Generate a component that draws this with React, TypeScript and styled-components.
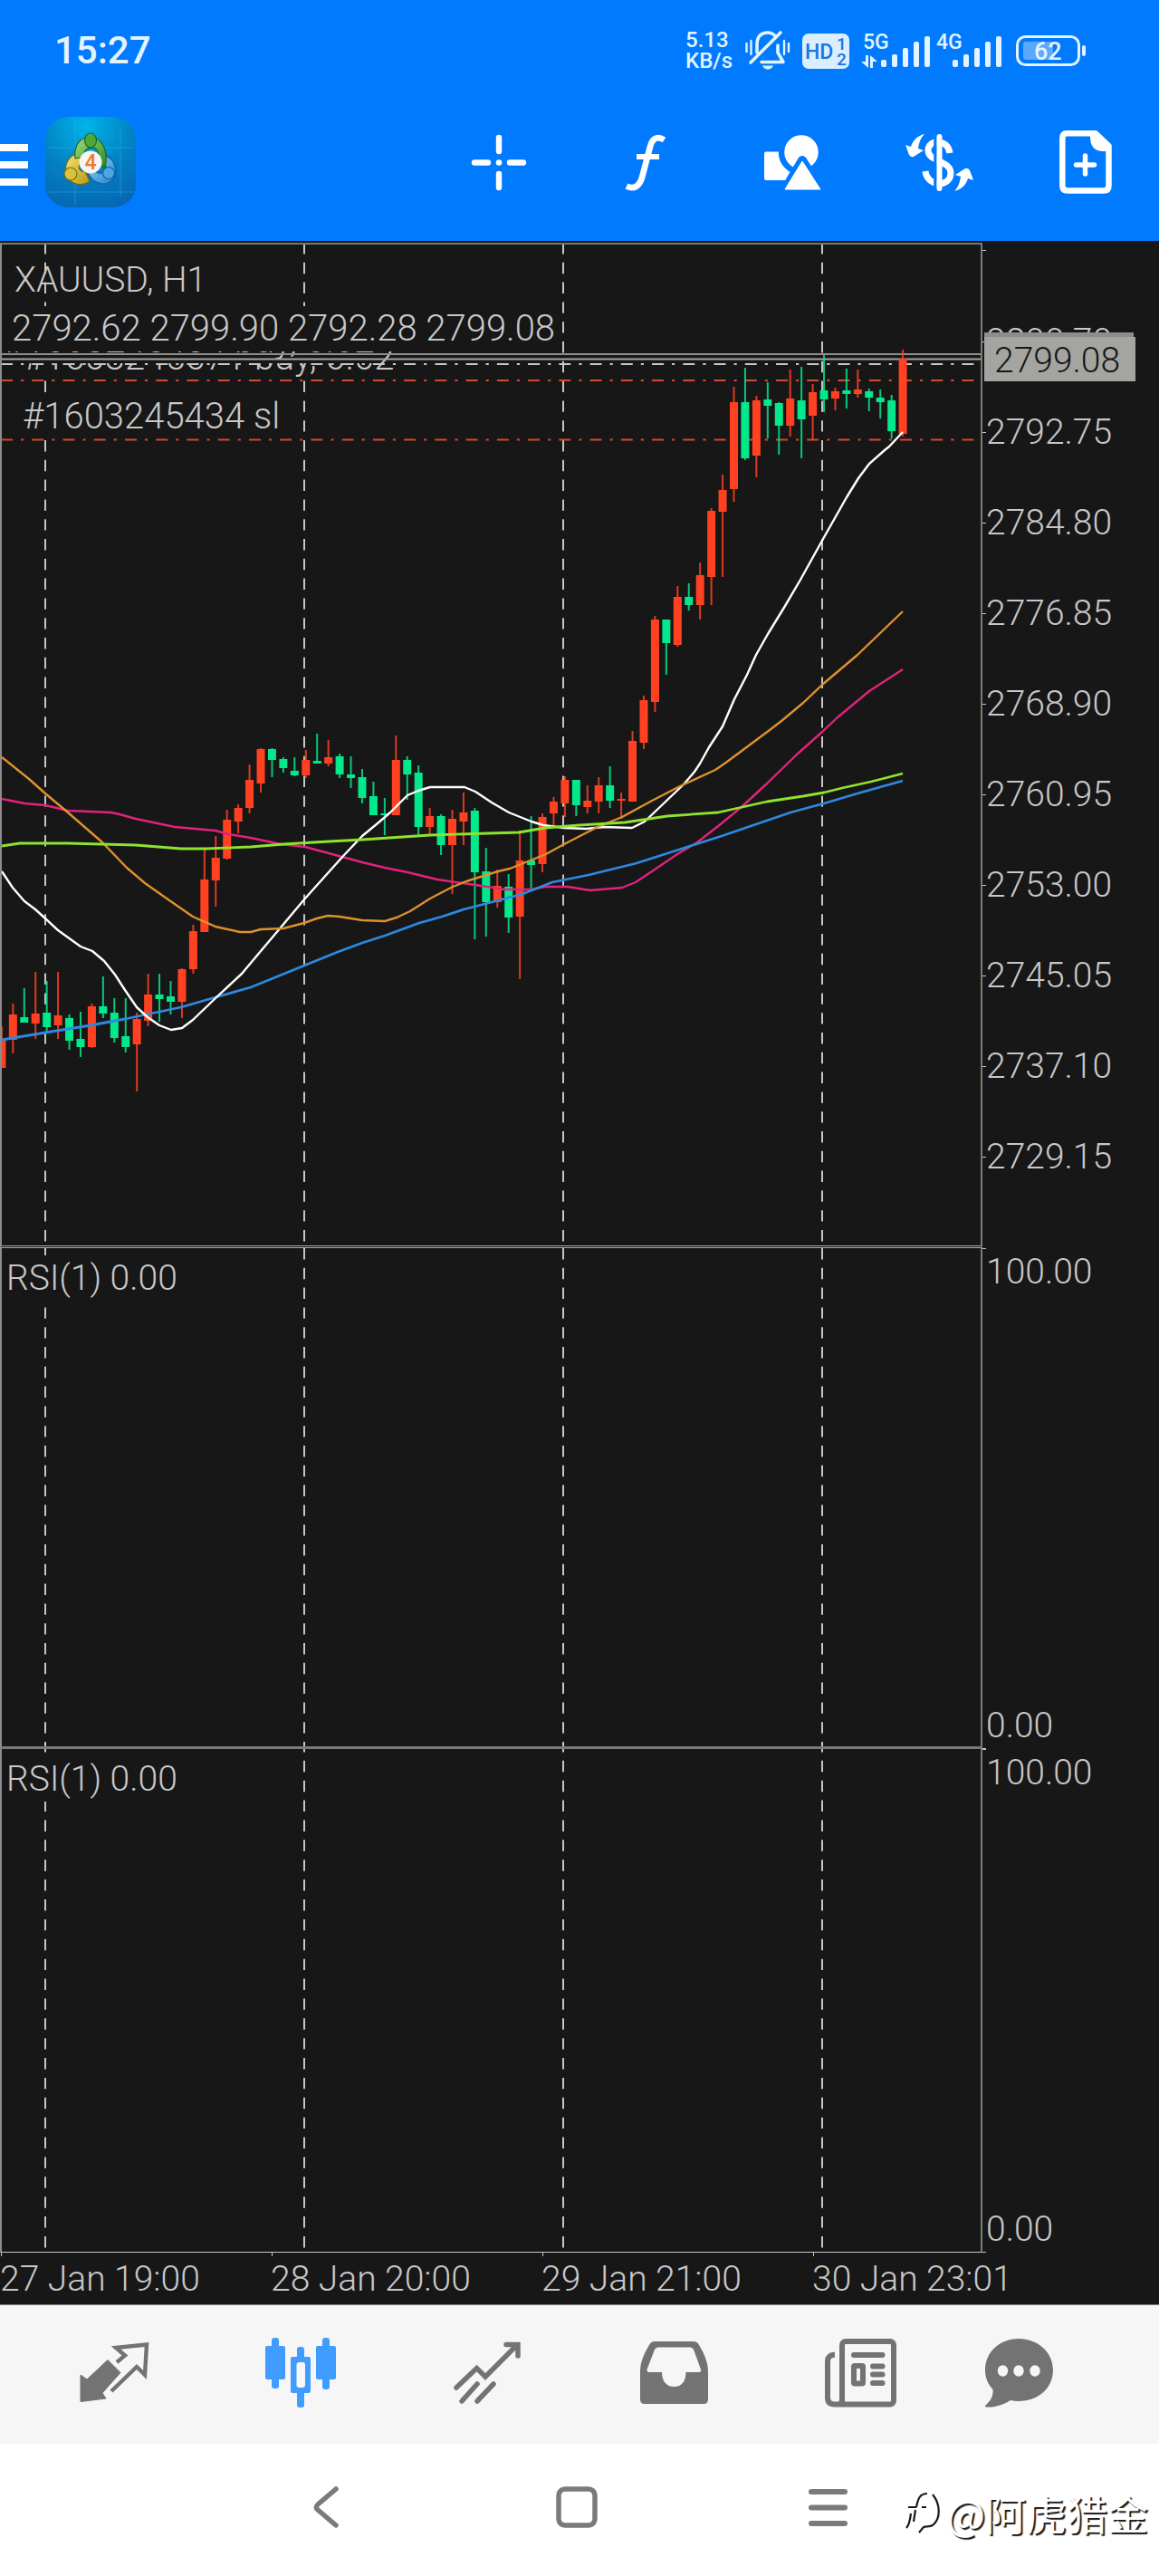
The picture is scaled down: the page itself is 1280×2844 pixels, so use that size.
import React from "react";
import styled, { createGlobalStyle } from "styled-components";

const GlobalStyle = createGlobalStyle`
  *, *::before, *::after { box-sizing: border-box; }
  body { margin: 0; background: #171717; }
  svg { display: block; overflow: visible; }
`;

const sans = `Roboto, "Liberation Sans", "Noto Sans CJK SC", sans-serif`;

/* ---------- Page ---------- */

const Page = styled.div`
  display: flex;
  flex-direction: column;
  background: #171717;
  font-family: ${sans};
  overflow: hidden;
`;

/* ---------- Header ---------- */

const Header = styled.header`
  background: #007aff;
  padding-bottom: 20px;
`;

const StatusBar = styled.div`
  display: flex;
  align-items: center;
  justify-content: space-between;
  height: 112px;
  padding: 0 80px 0 60px;
  color: #e3f3ff;
  font-weight: 500;
`;

const Clock = styled.time`
  font-size: 42px;
  line-height: 50px;
`;

const StatusIcons = styled.div`
  display: flex;
  align-items: center;
  gap: 13px;
`;

const Speed = styled.div`
  width: 53px;
  font-size: 24px;
  line-height: 23px;
`;

const Signals = styled.div`
  display: flex;
  gap: 7px;
`;

const StatusText = styled.text`
  font-family: ${sans};
  font-weight: 500;
  font-size: ${(p: { $size: number }) => p.$size}px;
`;

const Toolbar = styled.nav`
  display: flex;
  align-items: center;
  height: 134px;
`;

const IconButton = styled.button<{ $width?: string }>`
  display: flex;
  align-items: center;
  justify-content: center;
  width: ${(p) => p.$width ?? "auto"};
  height: 100%;
  padding: 0;
  border: 0;
  background: none;
  color: inherit;
  cursor: pointer;
`;

const Logo = styled.div`
  margin-left: 19px;
`;

const Tools = styled.div`
  display: flex;
  height: 100%;
  margin-left: auto;
  color: #ffffff;
`;

/* ---------- Chart ---------- */

const Chart = styled.main`
  padding-top: 2px;
  border-bottom: 1px solid #7a7a7a;
  color: #c8c8c8;
  font-size: 39px;
  font-weight: 300;
  line-height: 50px;
  white-space: nowrap;
`;

const Panel = styled.section<{ $height: number }>`
  display: grid;
  grid-template-columns: 1fr 195px;
  height: ${(p) => p.$height}px;
`;

const Plot = styled.div<{ $top?: boolean; $divider: string }>`
  position: relative;
  overflow: hidden;
  border-left: 2px solid #8c8c8c;
  border-right: 2px solid #7a7a7a;
  border-top: ${(p) => (p.$top ? "2px solid #7d7672" : "0")};
  border-bottom: ${(p) => p.$divider};
`;

const Layer = styled.svg`
  position: absolute;
  inset: 0;
  width: 100%;
  height: 100%;
`;

const OrderLabel = styled.div<{ $x: number; $y: number }>`
  position: absolute;
  left: ${(p) => p.$x}px;
  top: ${(p) => p.$y}px;
  background: #171717;
  font-size: 40px;
`;

const Caption = styled.div`
  position: relative;
  padding-top: 14px;
`;

const SymbolName = styled.h1`
  margin: 0 0 4px;
  padding-left: 14px;
  font: inherit;
`;

const Ohlc = styled.p`
  width: max-content;
  margin: 0;
  padding-left: 11px;
  background: #171717;
  font-size: 40px;
`;

const IndicatorName = styled.h2`
  position: relative;
  width: max-content;
  margin: 8px 0 0 5px;
  font: inherit;
  background: #171717;
`;

const PriceScale = styled.div`
  position: relative;
`;

const TopTick = styled.div`
  height: 59px;
  padding-top: 8px;
  &::before {
    content: "";
    display: block;
    width: 4px;
    height: 1px;
    background: #c8c8c8;
  }
`;

const PriceLabel = styled.div`
  display: flex;
  align-items: center;
  height: 100px;
  &::before {
    content: "";
    width: 4px;
    height: 1px;
    background: #c8c8c8;
  }
`;

const AskTag = styled.div`
  position: absolute;
  left: 2px;
  top: 99px;
  width: 165px;
  height: 49px;
  background: #8d8d8a;
`;

const BidTag = styled.div`
  position: absolute;
  left: 2px;
  top: 104px;
  width: 167px;
  height: 49px;
  padding: 1px 0 0 11px;
  background: #a4a4a1;
  color: #171717;
`;

const RangeScale = styled.div`
  display: flex;
  flex-direction: column;
  justify-content: space-between;
  &::before,
  &::after {
    content: "";
    width: 4px;
    height: 1px;
    background: #c8c8c8;
  }
`;

const RangeLabel = styled.div`
  padding-left: 4px;
  &:first-of-type {
    margin-bottom: auto;
  }
`;

const TimeAxis = styled.div`
  display: grid;
  grid-template-columns: repeat(3, 299px) 1fr;
  height: 57px;
`;

const TimeLabel = styled.div`
  &::before {
    content: "";
    display: block;
    width: 1px;
    height: 4px;
    margin-left: 1px;
    background: #c8c8c8;
  }
`;

/* ---------- Bottom bars ---------- */

const TabBar = styled.nav`
  display: grid;
  grid-template-columns: repeat(5, 1fr) 144px;
  height: 153px;
  padding: 0 82px 4px 23px;
  background: #f6f6f6;
  color: #737373;
`;

const Tab = styled(IconButton)<{ $active?: boolean }>`
  color: ${(p) => (p.$active ? "#409cff" : "#737373")};
`;

const SystemBar = styled.footer`
  position: relative;
  display: grid;
  grid-template-columns: repeat(3, 277px);
  justify-content: center;
  height: 146px;
  padding: 0 6px 6px 0;
  background: #ffffff;
  color: #7a7a7a;
`;

const Watermark = styled.div`
  position: absolute;
  right: 12px;
  bottom: 39px;
  display: flex;
  align-items: center;
  gap: 6px;
  color: #ffffff;
  font-family: "Noto Sans CJK SC", sans-serif;
  font-size: 45px;
  line-height: 60px;
  text-shadow: 2px 2px 1px #1a1a1a;
`;

/* ---------- Data ---------- */

type Dir = "u" | "d";
// high, body top, body bottom, low (canvas units), direction
const candles: [number, number, number, number, Dir][] = [
  [1133, 1148, 1179, 1179, "u"], [1108, 1120, 1148, 1163, "u"], [1091, 1123, 1129, 1129, "d"],
  [1073, 1119, 1130, 1147, "u"], [1083, 1118, 1134, 1140, "d"], [1073, 1121, 1132, 1147, "u"],
  [1120, 1124, 1149, 1159, "d"], [1117, 1147, 1156, 1167, "d"], [1108, 1111, 1156, 1157, "u"],
  [1078, 1111, 1119, 1124, "d"], [1102, 1118, 1146, 1151, "d"], [1102, 1144, 1156, 1162, "d"],
  [1118, 1125, 1153, 1205, "u"], [1075, 1098, 1127, 1133, "u"], [1075, 1098, 1103, 1128, "d"],
  [1083, 1100, 1106, 1120, "d"], [1069, 1070, 1106, 1124, "u"], [1021, 1028, 1070, 1075, "u"],
  [937, 971, 1029, 1029, "u"], [923, 947, 972, 1001, "u"], [894, 905, 948, 949, "u"],
  [888, 892, 907, 920, "u"], [844, 861, 892, 898, "u"], [826, 827, 865, 875, "u"],
  [826, 827, 839, 858, "d"], [836, 838, 848, 853, "d"], [836, 851, 856, 857, "d"],
  [828, 839, 856, 859, "u"], [810, 840, 843, 843, "d"], [817, 836, 843, 846, "u"],
  [832, 835, 855, 859, "d"], [835, 855, 859, 870, "d"], [849, 858, 881, 887, "d"],
  [863, 879, 900, 900, "d"], [881, 898, 900, 922, "d"], [812, 839, 900, 900, "u"],
  [835, 839, 855, 883, "d"], [845, 853, 913, 922, "d"], [892, 901, 913, 921, "u"],
  [899, 901, 933, 944, "d"], [894, 904, 933, 987, "u"], [875, 897, 907, 933, "u"],
  [892, 895, 963, 1037, "d"], [936, 962, 996, 1034, "d"], [960, 978, 996, 1002, "u"],
  [965, 979, 1013, 1030, "d"], [917, 950, 1012, 1081, "u"], [901, 950, 955, 981, "d"],
  [898, 902, 954, 963, "u"], [880, 885, 898, 912, "u"], [857, 861, 887, 902, "u"],
  [861, 861, 889, 901, "d"], [867, 884, 891, 898, "u"], [858, 867, 885, 898, "u"],
  [846, 867, 884, 892, "d"], [875, 882, 884, 904, "u"], [807, 818, 885, 885, "u"],
  [768, 773, 820, 827, "u"], [680, 684, 775, 786, "u"], [684, 684, 710, 745, "d"],
  [647, 659, 712, 714, "u"], [644, 659, 668, 674, "d"], [621, 635, 668, 684, "u"],
  [561, 564, 637, 668, "u"], [524, 541, 565, 637, "u"], [427, 444, 540, 554, "u"],
  [406, 444, 506, 508, "d"], [437, 442, 503, 527, "u"], [422, 441, 448, 484, "d"],
  [444, 445, 470, 502, "d"], [408, 440, 470, 482, "u"], [405, 442, 463, 506, "d"],
  [424, 433, 459, 486, "u"], [392, 431, 441, 455, "d"], [428, 432, 440, 453, "u"],
  [407, 431, 435, 451, "d"], [408, 430, 435, 439, "u"], [429, 432, 439, 454, "d"],
  [430, 439, 444, 462, "d"], [436, 442, 476, 484, "d"], [386, 396, 479, 482, "u"],
];
const FIRST_X = 1.9;
const STEP = 12.44;
const candleColor = { u: "#ff4122", d: "#03e88b" };

const averages = [
  {
    color: "#e0237c",
    width: 2.4,
    points:
      "2,882 27,887 50,889 75,895 123,897 132,899 150,904 193,913 238,917 252,921 277,925 310,932 337,935 363,942 400,952 425,958 450,963 483,971 525,977 557,982 587,982 602,979 627,979 652,983 687,980 702,974 723,960 748,943 770,930 797,909 820,890 847,865 880,833 908,808 925,792 960,763 997,739",
  },
  {
    color: "#2c89e0",
    width: 2.8,
    points:
      "2,1148 50,1140 100,1132 138,1125 200,1112 238,1101 277,1090 336,1066 373,1051 400,1041 425,1033 463,1019 488,1012 512,1004 543,996 577,987 610,974 650,966 703,953 753,937 797,923 873,897 910,887 947,876 997,862",
  },
  {
    color: "#ffffff",
    width: 2.4,
    points:
      "2,962 14,980 27,995 39,1004 50,1014 64,1027 89,1045 102,1050 115,1061 127,1076 138,1093 151,1112 163,1123 176,1132 189,1137 201,1135 213,1126 238,1102 267,1075 288,1050 310,1024 336,993 362,964 380,944 400,923 417,909 431,897 450,878 462,873 475,869 513,869 525,874 543,886 562,897 587,907 600,911 623,914 647,915 667,913 698,914 712,907 733,887 755,866 767,852 773,843 783,825 798,802 811,772 825,745 835,723 848,700 867,669 884,640 909,595 935,549 948,528 960,512 977,497 982,493 997,477",
  },
  {
    color: "#dd922c",
    width: 2.4,
    points:
      "2,836 32,860 50,876 75,897 113,930 140,958 160,975 187,994 213,1012 238,1023 265,1029 277,1029 288,1026 313,1025 336,1019 350,1014 362,1011 375,1012 400,1016 425,1017 438,1013 453,1006 475,992 500,979 515,973 550,962 563,959 603,943 623,932 660,913 687,902 720,884 753,867 790,850 803,841 850,806 863,796 887,776 908,756 947,723 997,675",
  },
  {
    color: "#8fe32e",
    width: 2.8,
    points:
      "2,934 22,931 75,931 150,933 200,937 227,937 277,935 313,932 363,929 400,927 475,922 540,920 573,919 602,914 640,911 690,908 737,901 793,897 820,891 847,885 887,879 910,875 930,870 962,863 997,854",
  },
];

const prices = [
  "2800.70", "2792.75", "2784.80", "2776.85", "2768.90",
  "2760.95", "2753.00", "2745.05", "2737.10", "2729.15",
];
const times = ["27 Jan 19:00", "28 Jan 20:00", "29 Jan 21:00", "30 Jan 23:01"];
const dayLines = [50, 336, 622, 908];

/* ---------- Chart pieces ---------- */

function DayGrid({ top, bottom, offset = 0 }: { top: number; bottom: number; offset?: number }) {
  return (
    <Layer viewBox={`2 ${top} 1081 ${bottom - top}`} preserveAspectRatio="none">
      {dayLines.map((x) => (
        <line
          key={x}
          x1={x} x2={x} y1={top} y2={bottom}
          stroke="#c6c6c6" strokeWidth="2"
          strokeDasharray="12.4 9.4" strokeDashoffset={offset}
        />
      ))}
    </Layer>
  );
}

function PriceSeries() {
  const dashDot = "13 9 3.2 9.04";
  return (
    <Layer viewBox="2 270 1081 1105" preserveAspectRatio="none">
      <path d="M1 391H1085" stroke="#8e8e8b" strokeWidth="2" />
      <path d="M1 396.5H1085" stroke="#a6a6a3" strokeWidth="2" />
      <path d="M1 402H1085" stroke="#c8c8c8" strokeWidth="2" strokeDasharray={dashDot} />
      <path d="M1 420H1085M1 485.5H1085" stroke="#d24a30" strokeWidth="2.2" strokeDasharray={dashDot} />
      {candles.map(([high, top, bottom, low, dir], i) => {
        const x = FIRST_X + STEP * i;
        return (
          <g key={i} fill={candleColor[dir]}>
            <rect x={x - 1} y={high} width="2" height={low - high} opacity="0.85" />
            <rect x={x - 4.5} y={top} width="9" height={Math.max(bottom - top, 2)} />
          </g>
        );
      })}
      {averages.map((a) => (
        <polyline
          key={a.color} points={a.points} fill="none"
          stroke={a.color} strokeWidth={a.width} strokeLinejoin="round"
        />
      ))}
    </Layer>
  );
}

function IndicatorPanel({ height, top, offset, divider }: { height: number; top: number; offset: number; divider: string }) {
  return (
    <Panel $height={height}>
      <Plot $divider={divider}>
        <DayGrid top={top} bottom={top + height - 3} offset={offset} />
        <IndicatorName>RSI(1) 0.00</IndicatorName>
      </Plot>
      <RangeScale>
        <RangeLabel>100.00</RangeLabel>
        <RangeLabel>0.00</RangeLabel>
      </RangeScale>
    </Panel>
  );
}

/* ---------- Icons ---------- */

const BellOff = () => (
  <svg width="50" height="44" viewBox="0 0 50 44" fill="none" stroke="#e3f3ff" strokeWidth="3.6" strokeLinecap="round">
    <path d="M13 24V15C13 6 18 2 24.500 2C29 2 32 4 34 7M36 16V24L42 34.500H18" strokeLinejoin="round" />
    <path d="M6 35L39 2" />
    <path d="M19 38.500H31C29 44 21 44 19 38.500Z" fill="#e3f3ff" stroke="none" />
    <path d="M1.500 14V23M6.500 11V26M43 11V26M48 14V23" strokeWidth="2.4" />
  </svg>
);

const HdBadge = () => (
  <svg width="52" height="39" viewBox="0 0 52 39">
    <rect width="52" height="39" rx="7" fill="#dbeeff" />
    <g fill="#1477e6">
      <StatusText $size={23} x="3" y="28">HD</StatusText>
      <StatusText $size={19} x="38" y="18">1</StatusText>
      <StatusText $size={19} x="38" y="35">2</StatusText>
    </g>
  </svg>
);

function Signal({ label, data }: { label: string; data?: boolean }) {
  const shift = data ? 22 : 18;
  return (
    <svg width={shift + 54} height="40" viewBox={`0 0 ${shift + 54} 40`} fill="#e3f3ff">
      <StatusText $size={23} x={data ? 2 : 0} y="18">{label}</StatusText>
      {data && <path d="M5 25H8V39L0 32H5ZM10 39V25L18 32H13V39Z" />}
      {[8, 14, 21, 28, 34].map((h, i) => (
        <rect key={h} x={shift + i * 12} y={38 - h} width="6" height={h} rx="2" />
      ))}
    </svg>
  );
}

const Battery = () => (
  <svg width="81" height="36" viewBox="0 0 81 36">
    <rect x="4.500" y="2.500" width="68" height="31" rx="9" fill="none" stroke="#e3f3ff" strokeWidth="3" />
    <rect x="11" y="8" width="33" height="20" rx="3" fill="#5ba8ff" />
    <rect x="76" y="12" width="4" height="12" rx="2" fill="#e3f3ff" />
    <StatusText $size={27} x="23" y="28" fill="#e3f3ff">62</StatusText>
  </svg>
);

const MenuIcon = () => (
  <svg width="31" height="52" viewBox="0 0 31 52" fill="#ffffff">
    <rect y="6" width="31" height="8" />
    <rect y="25" width="31" height="8" />
    <rect y="44" width="31" height="8" />
  </svg>
);

const AppLogo = () => (
  <svg width="100" height="100" viewBox="0 0 100 100">
    <defs>
      <radialGradient id="tile" cx="0.45" cy="0.1" r="0.95">
        <stop offset="0" stopColor="#00b4e8" />
        <stop offset="0.55" stopColor="#0380c2" />
        <stop offset="1" stopColor="#0566b4" />
      </radialGradient>
      <linearGradient id="green" x1="0" y1="0" x2="1" y2="1">
        <stop offset="0" stopColor="#a5dc7e" />
        <stop offset="1" stopColor="#238a1c" />
      </linearGradient>
      <linearGradient id="yellow" x1="0" y1="0" x2="1" y2="1">
        <stop offset="0" stopColor="#f7e676" />
        <stop offset="1" stopColor="#b49a12" />
      </linearGradient>
      <linearGradient id="blue" x1="0" y1="0" x2="1" y2="1">
        <stop offset="0" stopColor="#9edcff" />
        <stop offset="1" stopColor="#1c7fd0" />
      </linearGradient>
    </defs>
    <rect width="100" height="100" rx="25" fill="url(#tile)" />
    <path d="M33 2V98M83 12V88M3 34H97M3 83H97" stroke="#3fb4ea" strokeOpacity="0.3" strokeWidth="1.500" />
    <g strokeWidth="1.200" strokeLinejoin="round">
      <path d="M44 41C29 38 20 49 23 64C28 76 42 77 49 71L44 60C36 62 34 51 44 50Z" fill="url(#yellow)" stroke="#6f6a16" />
      <path d="M61 43C76 42 80 57 76 67C69 78 52 77 45 57L53 56C58 66 66 63 67 55Z" fill="url(#blue)" stroke="#145f96" />
      <path d="M33 46C31 31 39 22 50 22C64 24 70 38 66 57L58 51C61 40 57 33 50 34C44 35 42 40 43 44Z" fill="url(#green)" stroke="#1c6720" />
      <ellipse cx="50" cy="26" rx="6.500" ry="8" fill="#4fa63c" stroke="#1c6720" />
      <circle cx="28" cy="63" r="7" fill="#d9c23c" stroke="#7a6c10" />
      <circle cx="70" cy="62" r="6.500" fill="#4aa8e6" stroke="#135f9c" />
    </g>
    <circle cx="50" cy="50" r="12.500" fill="#f7f5f3" />
    <StatusText $size={23} x="43.500" y="58" fill="#f0792b">4</StatusText>
  </svg>
);

const CrosshairIcon = () => (
  <svg width="62" height="63" viewBox="0 0 62 63" stroke="currentColor" strokeWidth="6.400" strokeLinecap="round">
    <path d="M31 4V19M31 44V59M4 31.500H19M43 31.500H58" />
    <circle cx="31" cy="31.500" r="3.300" fill="currentColor" stroke="none" />
  </svg>
);

const FunctionIcon = () => (
  <svg width="44" height="63" viewBox="0 0 44 63" fill="none" stroke="currentColor">
    <path d="M42.500 6.500C34 1 29 6 27 14L18 48C15 58 9 61.500 1 57.500" strokeWidth="6.800" />
    <path d="M12 25H37" strokeWidth="6" />
  </svg>
);

const ShapesIcon = () => (
  <svg width="63" height="61" viewBox="0 0 63 61">
    <path d="M2 18.500H18L32 40L25 50H2Q0 50 0 48V20.500Q0 18.500 2 18.500Z" fill="#ffffff" />
    <circle cx="41" cy="19" r="22" fill="#ffffff" stroke="#007aff" strokeWidth="6.500" />
    <path d="M42 28L62 60H23Z" fill="#ffffff" stroke="#007aff" strokeWidth="10" strokeLinejoin="round" />
    <path d="M42 29L62 60H23Z" fill="#ffffff" stroke="#ffffff" strokeLinejoin="round" />
  </svg>
);

const DollarIcon = () => (
  <svg width="75" height="63" viewBox="0 0 75 63" fill="none" stroke="#ffffff">
    <path d="M49 21C47 5 25 5 25 18C25 31 50 29 50 43C50 59 24 59 22 41" strokeWidth="7" />
    <path d="M33 5V58" stroke="#007aff" strokeWidth="3.500" />
    <path d="M37.500 3V60" strokeWidth="6" strokeLinecap="round" />
    <g fill="#ffffff" stroke="none">
      <path d="M21 0C13 2 8 7 6 14L0 12L4 23Q6 26 9 25L20 18L14 16C15 9 17 4 21 0Z" />
      <path d="M21 0C13 2 8 7 6 14L0 12L4 23Q6 26 9 25L20 18L14 16C15 9 17 4 21 0Z" transform="rotate(180 37.500 31.500)" />
    </g>
  </svg>
);

const NewOrderIcon = () => (
  <svg width="58" height="70" viewBox="0 0 58 70" fill="none" stroke="currentColor">
    <path d="M8 3.300H40L54.500 17V61Q54.500 66.500 49 66.500H9Q3.300 66.500 3.300 61V9Q3.300 3.300 8 3.300Z" strokeWidth="6.500" strokeLinejoin="round" />
    <path d="M34 4H41L55 17V23H47Q34 22 34 7Z" fill="currentColor" stroke="none" />
    <path d="M28.500 28V48M18.500 38H38.500" strokeWidth="5.500" strokeLinecap="round" />
  </svg>
);

const TradeIcon = () => (
  <svg width="76" height="68" viewBox="0 0 76 68">
    <path d="M1 36L8 41L31 19.500L45 33.500L25 56L29 62L1 65.500Z" fill="currentColor" stroke="currentColor" strokeLinejoin="round" />
    <path d="M41 22L50 14.500L40 6L74 2.500L72 36L63 27L35 54" fill="none" stroke="currentColor" strokeWidth="4.400" strokeLinejoin="miter" />
  </svg>
);

const CandlesIcon = () => (
  <svg width="78" height="77" viewBox="0 0 78 77" fill="currentColor">
    <rect width="22" height="37" y="9" rx="2" />
    <rect x="7" width="8" height="56" rx="3" />
    <rect x="56" width="22" height="37" y="9" rx="2" />
    <rect x="63" width="8" height="57" rx="3" />
    <rect x="35" y="10" width="8" height="67" rx="3" />
    <rect x="28" y="21" width="22" height="40" rx="2" />
    <rect x="34.500" y="27" width="9.500" height="28" rx="3" fill="#f6f6f6" />
  </svg>
);

const TrendIcon = () => (
  <svg width="74" height="70" viewBox="0 0 74 70" fill="none" stroke="currentColor" strokeWidth="5.500" strokeLinecap="round">
    <path d="M3 51L25.500 29.500L35 39L70 4M58 3.500H71V16" strokeLinejoin="miter" />
    <path d="M9 66L26 47M26 66L44 47" />
  </svg>
);

const InboxIcon = () => (
  <svg width="75" height="69" viewBox="0 0 75 69">
    <path
      fillRule="evenodd" fill="currentColor"
      d="M16 0H59Q63 0 65 4C71 14 75 23 75 34V64Q75 69 70 69H5Q0 69 0 64V34C0 23 4 14 10 4Q12 0 16 0ZM20 6.500Q17 6.500 16 9L7.500 31Q7 34 10 34H24C24 44 29 50 37.500 50C46 50 50.500 44 50.500 34H65Q68 34 67 31L59 9Q58 6.500 55 6.500Z"
    />
  </svg>
);

const NewsIcon = () => (
  <svg width="79" height="76" viewBox="0 0 79 76" fill="none" stroke="currentColor" strokeWidth="6">
    <rect x="19" y="3" width="57" height="69.500" rx="4" />
    <path d="M11 17.500Q3 18 3 25V65Q3 72.500 11 72.500H22" />
    <path d="M17 68V74" strokeWidth="3" />
    <path d="M32 18H63.500M53 30.500H63.500M53 39.500H63.500M53 49H63.500" strokeLinecap="round" />
    <rect x="32" y="30" width="10" height="19.500" rx="1" strokeLinejoin="round" />
  </svg>
);

const ChatIcon = () => (
  <svg width="75" height="76" viewBox="0 0 75 76" fill="currentColor">
    <path d="M37 0C58 0 75 15 75 34.500C75 55 58 69 37 69Q32 69 28 68C18 74 10 76 1 75.500Q-1 75 1 73C7 68 9 62 8.500 56C3 50 0 43 0 34.500C0 15 16 0 37 0Z" />
    <g fill="#f6f6f6">
      <ellipse cx="19.500" cy="35.500" rx="5.700" ry="6.200" />
      <ellipse cx="37" cy="35.500" rx="5.700" ry="6.200" />
      <ellipse cx="55" cy="35.500" rx="5.700" ry="6.200" />
    </g>
  </svg>
);

const BackIcon = () => (
  <svg width="28" height="46" viewBox="0 0 28 46" fill="none" stroke="currentColor" strokeWidth="5.500" strokeLinecap="round">
    <path d="M25 3L5 20Q1.500 23 5 26L25 43" />
  </svg>
);

const HomeIcon = () => (
  <svg width="46" height="46" viewBox="0 0 46 46" fill="none" stroke="currentColor" strokeWidth="5.500">
    <rect x="3" y="3" width="40" height="40" rx="7" />
  </svg>
);

const RecentsIcon = () => (
  <svg width="43" height="41" viewBox="0 0 43 41" fill="none" stroke="currentColor" strokeWidth="6" strokeLinecap="round">
    <path d="M3 3H40M3 20.500H40M3 38H40" />
  </svg>
);

const WatermarkMark = () => (
  <svg width="39" height="48" viewBox="0 0 39 48" fill="none" stroke="#1a1a1a" strokeWidth="2.200">
    <path d="M24 2C17 2 14 6 12 17M3 17H12M11 20L9 33M1 40C4 37 5 32 6 24M18 17H23M30 3C39 14 39 30 30 37C27 39 23 38 20 39L15 45" />
  </svg>
);

/* ---------- App ---------- */

const tools = [
  { name: "Crosshair", icon: <CrosshairIcon /> },
  { name: "Indicators", icon: <FunctionIcon /> },
  { name: "Objects", icon: <ShapesIcon /> },
  { name: "Symbols", icon: <DollarIcon /> },
  { name: "New order", icon: <NewOrderIcon /> },
];

const tabs = [
  { name: "Quotes", icon: <TradeIcon /> },
  { name: "Chart", icon: <CandlesIcon />, active: true },
  { name: "Trade", icon: <TrendIcon /> },
  { name: "History", icon: <InboxIcon /> },
  { name: "News", icon: <NewsIcon /> },
  { name: "Messages", icon: <ChatIcon /> },
];

const systemKeys = [
  { name: "Back", icon: <BackIcon /> },
  { name: "Home", icon: <HomeIcon /> },
  { name: "Recent apps", icon: <RecentsIcon /> },
];

export default function App() {
  return (
    <Page>
      <GlobalStyle />
      <Header>
        <StatusBar>
          <Clock>15:27</Clock>
          <StatusIcons>
            <Speed>
              <div>5.13</div>
              <div>KB/s</div>
            </Speed>
            <BellOff />
            <HdBadge />
            <Signals>
              <Signal label="5G" data />
              <Signal label="4G" />
            </Signals>
            <Battery />
          </StatusIcons>
        </StatusBar>
        <Toolbar>
          <IconButton aria-label="Menu"><MenuIcon /></IconButton>
          <Logo><AppLogo /></Logo>
          <Tools>
            {tools.map((t) => (
              <IconButton key={t.name} aria-label={t.name} $width="162px">{t.icon}</IconButton>
            ))}
          </Tools>
        </Toolbar>
      </Header>

      <Chart>
        <Panel $height={1110}>
          <Plot $top $divider="3px double #a8a8a8">
            <DayGrid top={270} bottom={1375} offset={2} />
            <OrderLabel $x={24} $y={100}>#1603245671 buy, 0.02</OrderLabel>
            <OrderLabel $x={2} $y={81}>#1603245434 buy, 0.02</OrderLabel>
            <OrderLabel $x={23} $y={165}>#1603245434 sl</OrderLabel>
            <Caption>
              <SymbolName>XAUUSD, H1</SymbolName>
              <Ohlc>2792.62 2799.90 2792.28 2799.08</Ohlc>
            </Caption>
            <PriceSeries />
          </Plot>
          <PriceScale>
            <TopTick />
            {prices.map((p) => <PriceLabel key={p}>{p}</PriceLabel>)}
            <AskTag />
            <BidTag>2799.08</BidTag>
          </PriceScale>
        </Panel>
        <IndicatorPanel height={553} top={1378} offset={0} divider="3px solid #7a7a7a" />
        <IndicatorPanel height={556} top={1931} offset={9} divider="1px solid #c8c8c8" />
        <TimeAxis>
          {times.map((t) => <TimeLabel key={t}>{t}</TimeLabel>)}
        </TimeAxis>
      </Chart>

      <TabBar>
        {tabs.map((t) => (
          <Tab key={t.name} aria-label={t.name} $active={t.active} $width="100%">{t.icon}</Tab>
        ))}
      </TabBar>

      <SystemBar>
        {systemKeys.map((k) => (
          <IconButton key={k.name} aria-label={k.name} $width="100%">{k.icon}</IconButton>
        ))}
        <Watermark>
          <WatermarkMark />
          <span>@阿虎猎金</span>
        </Watermark>
      </SystemBar>
    </Page>
  );
}
